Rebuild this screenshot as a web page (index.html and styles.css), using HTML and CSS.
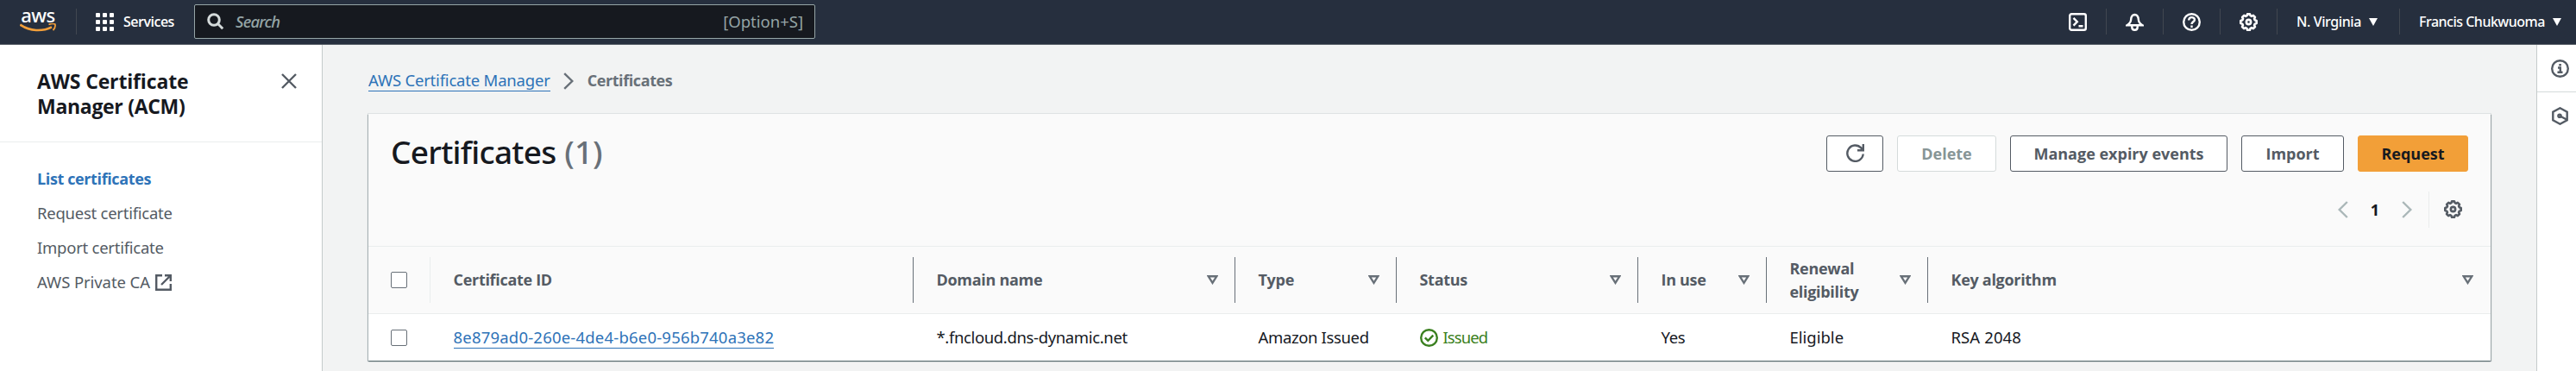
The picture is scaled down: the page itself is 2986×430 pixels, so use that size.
FILE: index.html
```html
<!DOCTYPE html>
<html lang="en">
<head>
<meta charset="utf-8">
<title>AWS Certificate Manager</title>
<link rel="stylesheet" href="styles.css">
</head>
<body>
<svg class="defs" aria-hidden="true">
  <symbol id="gear" viewBox="0 0 16 16"><g fill="none" stroke="currentColor" stroke-width="2" stroke-linejoin="round"><path d="M6.900 1h2.200l.5 1.400 1.100.5 1.400-.7 1.600 1.600-.7 1.400.5 1.100 1.500.5v2.400l-1.500.5-.5 1.100.7 1.400-1.600 1.600-1.400-.7-1.100.5L9.100 15H6.900l-.5-1.400-1.100-.5-1.400.7-1.600-1.600.7-1.400-.5-1.100L1 9.200V6.800l1.600-.5.5-1.100-.7-1.400L4 2.200l1.400.7 1.100-.5z"/><circle cx="8" cy="8" r="2"/></g></symbol>
  <symbol id="sort" viewBox="0 0 13 11"><path d="M1.700 1.300h9.600L6.500 8.800z" fill="none" stroke="currentColor" stroke-width="2.400"/></symbol>
</svg>
<header class="top">
  <a class="logo"><span>aws</span><svg viewBox="0 0 42 11"><path d="M.3 1.600C12 9.400 26 9.800 37 4.300" fill="none" stroke="#f29f3a" stroke-width="2.600"/><path d="M33.500 1.500c3-1.300 6-1.200 7.300-.4.6 2-.3 4.800-2.300 7" fill="none" stroke="#f29f3a" stroke-width="1.800"/></svg></a>
  <i class="bar"></i>
  <a class="services"><span class="waffle"><i></i><i></i><i></i><i></i><i></i><i></i><i></i><i></i><i></i></span>Services</a>
  <div class="search">
    <svg viewBox="0 0 20 20"><circle cx="8" cy="8" r="6.300"/><path d="M12.500 12.500l5.700 5.700"/></svg>
    <em>Search</em><kbd>[Option+S]</kbd>
  </div>
  <nav class="tools">
    <a><svg viewBox="0 0 21 21"><rect x="1.200" y="1.200" width="18.600" height="18.600" rx="2"/><path d="M5.500 5.800l4.300 4.400-4.300 4.500M11.500 15.200h5"/></svg></a>
    <a><svg viewBox="0 0 21 21"><path d="M9 2.200h3M10.500 2C7.200 2.200 6.300 4.500 6.100 8c-.2 2.800-1.600 4.500-4.500 6.200h17.800c-2.900-1.700-4.300-3.400-4.500-6.200-.2-3.500-1.100-5.800-4.400-6zM7.300 14.500v2c0 4.400 6.400 4.400 6.400 0v-2"/></svg></a>
    <a><svg viewBox="0 0 21 21"><circle cx="10.500" cy="10.500" r="9.300"/><path d="M7.200 8.500c0-4.600 6.700-4.300 6.700-.6 0 2.300-3.400 2.400-3.400 5M10.500 14.500v2.500"/></svg></a>
    <a><svg viewBox="0 0 16 16"><use href="#gear"/></svg></a>
    <a class="region">N. Virginia<i class="caret"></i></a>
    <a class="user">Francis Chukwuoma<i class="caret"></i></a>
  </nav>
</header>
<div class="shell">
  <aside class="side">
    <div class="side-head"><h2>AWS Certificate<br>Manager (ACM)</h2><svg viewBox="0 0 18 18"><path d="M1 1l16 16M17 1L1 17"/></svg></div>
    <ul>
      <li class="on">List certificates</li>
      <li>Request certificate</li>
      <li>Import certificate</li>
      <li class="ext">AWS Private CA<svg viewBox="0 0 19 19"><path d="M8 1.200H1.200v16.600h16.600V11M11 1.200h6.800V8M17.500 1.500L7 12"/></svg></li>
    </ul>
  </aside>
  <main>
    <div class="crumbs"><a>AWS Certificate Manager</a><svg viewBox="0 0 12 20"><path d="M1.200 1.200L10.300 10l-9.100 8.800"/></svg><b>Certificates</b></div>
    <section class="card">
      <div class="card-head">
        <h1>Certificates <span>(1)</span></h1>
        <div class="actions">
          <button class="refresh"><svg viewBox="0 0 21 21"><path d="M19.700 11.500A9.200 9.200 0 1 1 17.300 4.400L19 6.500M19.800 0v7.200H13"/></svg></button>
          <button class="delete" disabled>Delete</button>
          <button class="manage">Manage expiry events</button>
          <button class="import">Import</button>
          <button class="request">Request</button>
        </div>
      </div>
      <div class="pager">
        <svg class="arrow" viewBox="0 0 12 20"><path d="M10.800 1L1.700 10l9.100 9"/></svg><b>1</b><svg class="arrow" viewBox="0 0 12 20"><path d="M1.200 1l9.100 9-9.100 9"/></svg><i></i><svg class="cog"><use href="#gear"/></svg>
      </div>
      <div class="row head">
        <div class="check"><span class="box"></span></div>
        <div>Certificate ID</div>
        <div>Domain name<svg><use href="#sort"/></svg></div>
        <div>Type<svg><use href="#sort"/></svg></div>
        <div>Status<svg><use href="#sort"/></svg></div>
        <div>In use<svg><use href="#sort"/></svg></div>
        <div>Renewal<br>eligibility<svg><use href="#sort"/></svg></div>
        <div>Key algorithm<svg><use href="#sort"/></svg></div>
      </div>
      <div class="row body">
        <div class="check"><span class="box"></span></div>
        <div><a>8e879ad0-260e-4de4-b6e0-956b740a3e82</a></div>
        <div class="tight">*.fncloud.dns-dynamic.net</div>
        <div class="tight">Amazon Issued</div>
        <div class="ok"><svg viewBox="0 0 21 21"><circle cx="10.500" cy="10.500" r="9.300"/><path d="M5.800 10.300l3.500 3.500 6-6.200"/></svg>Issued</div>
        <div class="tight">Yes</div>
        <div>Eligible</div>
        <div class="wide">RSA 2048</div>
      </div>
    </section>
  </main>
  <aside class="rail">
    <a><svg viewBox="0 0 21 21"><circle cx="10.500" cy="10.500" r="9.300"/><path d="M8 9.500h2.800v5M7.500 14.700h6M9.300 6.200h2.600"/></svg></a>
    <a><svg viewBox="0 0 21 21"><path d="M10.500 1.300l8.200 4.500v9.400l-8.200 4.500-8.200-4.500V5.800zM10.500 10.500l8 4.300"/><circle cx="10" cy="10.200" r="1.600"/></svg></a>
  </aside>
</div>
</body>
</html>
```
FILE: styles.css
```css
*{box-sizing:border-box}
body{margin:0;height:430px;overflow:hidden;display:flex;flex-direction:column;background:#f2f3f3;color:#16191f;font:400 18.5px/26.67px "Noto Sans","Open Sans",sans-serif}
svg{display:block;flex:none;fill:none;stroke:currentColor;stroke-width:2.4}
h1,h2,ul{margin:0;padding:0;list-style:none}
.defs{display:none}

.top{height:52px;flex:none;display:flex;align-items:center;background:#262f3e;border-bottom:1px solid #545b64;color:#fff;padding-bottom:1px}
.logo{width:42px;margin-left:23px;display:flex;flex-direction:column;align-items:center}
.logo span{font-size:22px;font-weight:500;line-height:20px;height:17px;margin-top:-5px;letter-spacing:-.5px}
.logo svg{width:42px;height:11px;margin-top:3px}
.bar{width:1px;height:30px;background:#414750;margin:0 22px 0 23px}
.services{display:flex;align-items:center;width:115px;font:600 16px "Open Sans",sans-serif;letter-spacing:-.5px}
.waffle{display:grid;grid-template-columns:repeat(3,5px);gap:3px;width:21px;margin-right:11px}
.waffle i{height:5px;background:#fff;border-radius:1px}
.search{width:720px;height:40px;margin-left:-1px;display:flex;align-items:center;background:#16191f;border:1px solid #95a5a6;border-radius:2px;padding:0 13px 0 14px;color:#95a5a6}
.search svg{width:20px;height:20px;color:#d5dbdb;stroke-width:3}
.search em{font-weight:500;margin-left:13px;letter-spacing:-.8px}
.search kbd{font:inherit;margin-left:auto}
.tools{margin-left:auto;display:grid;grid-template-columns:65px 66px 66px 66px 142px 205px;align-items:center;font-size:16px;font-weight:500;line-height:30px;letter-spacing:-.4px}
.tools a{display:flex;align-items:center;justify-content:center;height:30px;border-left:1px solid #414750}
.tools a:first-child{border:0}
.tools svg{width:21px;height:21px}
.tools .region,.tools .user{justify-content:flex-start;padding-left:22px}
.tools .user{letter-spacing:-.5px}
.caret{border:5px solid transparent;border-top:9px solid #fff;border-bottom:0;margin-left:9px}

.shell{flex:1;display:flex;min-height:0}
.side{width:373px;flex:none;background:#fff;box-shadow:1px 0 0 #c5cbcb;color:#545b64}
.side-head{height:113px;padding:28px 29px 0 43px;display:flex;justify-content:space-between;border-bottom:1px solid #eaeded}
.side h2{color:#16191f;font:700 23px/29px "Open Sans",sans-serif;letter-spacing:-.3px}
.side h2::first-line{letter-spacing:-.15px}
.side-head svg{width:18px;height:18px;margin-top:5px}
.side ul{padding:22px 0 0 43px}
.side li{height:40px;line-height:40px;display:flex;align-items:center;letter-spacing:-.25px}
.side .ext{letter-spacing:-.08px}
.side .on{color:#2e73b8;font-family:"Open Sans",sans-serif;font-size:18px;font-weight:700;letter-spacing:-.38px}
.side li svg{width:19px;height:19px;margin-left:6px}

main{flex:1;margin-right:1px;padding:28px 53px 0 54px}
.crumbs{display:flex;align-items:flex-start;color:#687078}
.crumbs a,.body a{color:#2e73b8;border-bottom:1px solid #2e73b8}
.crumbs a{letter-spacing:-.2px;height:26px}
.crumbs svg{width:12px;height:20px;margin:4px 16px 0 15px}
.crumbs b{font-family:"Open Sans",sans-serif;font-size:18px;letter-spacing:-.4px}
.card{margin-top:25px;height:286px;background:#fafafa;box-shadow:0 0 0 1px rgba(0,28,36,.08),1px 1px 1px rgba(0,28,36,.25),-1px 1px 1px rgba(0,28,36,.2),0 1px 1px rgba(0,28,36,.35)}
.card-head{height:79px;display:flex;justify-content:space-between;padding:25px 26px 0}
h1{font-size:37px;font-weight:500;line-height:38px;letter-spacing:-.75px}
h1 span{color:#687078;letter-spacing:0;margin-left:1px}
.actions{display:flex;gap:16px}
button{height:42px;padding:0;background:#fff;border:1px solid #545b64;border-radius:3px;color:#545b64;font:700 18px/26px "Open Sans",sans-serif}
.refresh{width:66px}.delete{width:115px}.manage{width:252px}.import{width:119px}
.refresh svg{width:21px;height:21px;margin:auto}
.delete{border-color:#d5dbdb;color:#879596}
.request{width:128px;background:#f29f38;border-color:#f29f38;color:#16191f}
.pager{height:74px;padding:11px 33px 0 0;display:flex;justify-content:flex-end;align-items:flex-start;line-height:42px}
.pager b{width:62px;text-align:center;font-size:18px}
.pager .arrow{width:12px;height:20px;margin-top:11px;color:#aab7b8}
.pager i{width:1px;height:42px;background:#eaeded;margin:0 17px 0 19px}
.pager .cog{width:21px;height:21px;margin-top:10px;color:#545b64;stroke:none}
.row{display:grid;grid-template-columns:72px 560px 373px 187px 280px 149px 187px 1fr;border-top:1px solid #eaeded}
.row>div{display:flex;align-items:center;padding-left:26.5px}
.row>.check{padding-left:26px}
.head{height:78px;align-items:center;color:#545b64;font-family:"Open Sans",sans-serif;font-size:18px;font-weight:700;letter-spacing:-.3px}
.head>div{height:53px;padding-top:1px;border-right:1px solid #687078}
.head>.check{border-color:#eaeded;padding-top:0}
.head>div:last-child{border:0;padding-right:2px}
.head svg{width:13px;height:11px;margin-left:auto;margin-right:19px;color:#687078;stroke:none}
.head>div:last-child svg{margin-right:18px}
.box{width:19px;height:19px;background:#fff;border:1px solid #687078;border-radius:2px}
.body{height:55px;background:#fff}
.body>div{padding-top:1px}
.body a{letter-spacing:.2px;line-height:25px}
.body .tight{letter-spacing:-.36px}
.body .wide{letter-spacing:.1px}
.ok{color:#3b8020;letter-spacing:-.9px}
.ok svg{width:21px;height:21px;margin-right:6px}

.rail{width:45px;flex:none;background:#fff;box-shadow:-1px 0 0 #c5cbcb;color:#545b64}
.rail a{height:55px;display:flex;align-items:center;padding-left:16px;border-bottom:1px solid #d5dbdb}
.rail a:last-child{border:0}
.rail svg{width:21px;height:21px}
```
